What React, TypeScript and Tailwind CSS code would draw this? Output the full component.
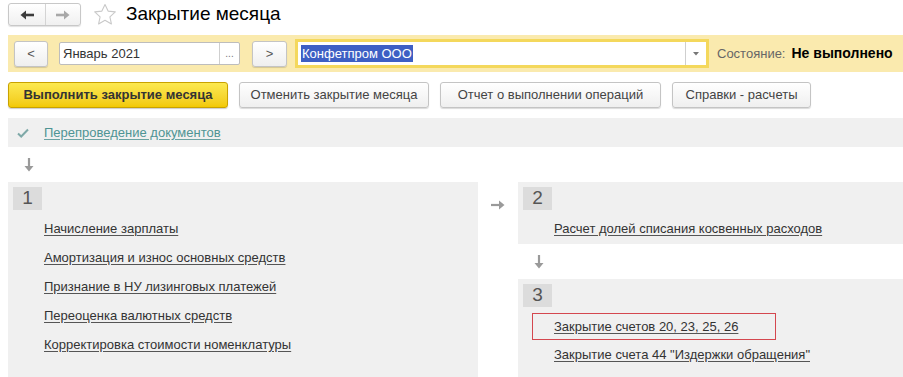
import React from 'react';

const font = { fontFamily: '"Liberation Sans", Arial, sans-serif' };

function Star() {
  return (
    <svg width="24" height="23" viewBox="0 0 24 23" className="block">
      <path
        d="M12 1.5l3.1 6.6 7.2.8-5.4 4.9 1.5 7.1L12 17.3l-6.4 3.6 1.5-7.1-5.4-4.9 7.2-.8z"
        fill="none"
        stroke="#c9c9c9"
        strokeWidth="1.1"
        strokeLinejoin="round"
      />
    </svg>
  );
}

function ArrowDown() {
  return (
    <svg width="10" height="14" viewBox="0 0 10 14" className="block">
      <path d="M5 0v9" stroke="#9a9a9a" strokeWidth="2.2" />
      <path d="M0.5 8h9L5 13.5z" fill="#9a9a9a" />
    </svg>
  );
}

function ArrowRight() {
  return (
    <svg width="14" height="10" viewBox="0 0 14 10" className="block">
      <path d="M0 5h9" stroke="#9a9a9a" strokeWidth="2.2" />
      <path d="M8 0.5v9L13.5 5z" fill="#9a9a9a" />
    </svg>
  );
}

function GrayButton({ children, className = '' }: { children: React.ReactNode; className?: string }) {
  return (
    <div
      className={`flex h-[26px] items-center justify-center rounded-[3px] border border-[#c4c4c4] bg-gradient-to-b from-white to-[#efefef] text-[13px] text-[#444] shadow-[0_1px_1px_rgba(0,0,0,0.15)] ${className}`}
    >
      {children}
    </div>
  );
}

function Step({ n }: { n: string }) {
  return (
    <div className="flex h-[23px] w-[29px] items-center justify-center bg-[#dcdcdc] text-[19px] text-[#555]">
      {n}
    </div>
  );
}

function Item({ children }: { children: React.ReactNode }) {
  return (
    <div className="flex h-[29px] items-center pl-[36px]">
      <span className="text-[13px] text-[#333] underline decoration-[#555] underline-offset-2">{children}</span>
    </div>
  );
}

export default function App() {
  const block1 = [
    'Начисление зарплаты',
    'Амортизация и износ основных средств',
    'Признание в НУ лизинговых платежей',
    'Переоценка валютных средств',
    'Корректировка стоимости номенклатуры',
  ];

  return (
    <div className="h-[377px] w-[903px] overflow-hidden bg-white text-[#333]" style={font}>
      {/* header */}
      <div className="flex h-[26px] items-end pl-[8px]">
        <div className="flex h-[23px] w-[73px] rounded-[3px] border border-[#c8c8c8] bg-gradient-to-b from-white to-[#f0f0f0] shadow-[0_1px_1px_rgba(0,0,0,0.12)]">
          <div className="flex w-[37px] items-center justify-center border-r border-[#d4d4d4]">
            <svg width="14" height="10" viewBox="0 0 14 10">
              <path d="M5 5h9" stroke="#3c3c3c" strokeWidth="2.6" />
              <path d="M6 0.5v9L0.5 5z" fill="#3c3c3c" />
            </svg>
          </div>
          <div className="flex flex-1 items-center justify-center">
            <svg width="14" height="10" viewBox="0 0 14 10">
              <path d="M0 5h9" stroke="#a8a8a8" strokeWidth="2.6" />
              <path d="M8 0.5v9L13.5 5z" fill="#a8a8a8" />
            </svg>
          </div>
        </div>
        <div className="ml-[12px]">
          <Star />
        </div>
        <div className="ml-[9px] mb-[1px] text-[19px] leading-[22px] text-black">Закрытие месяца</div>
      </div>

      {/* yellow bar */}
      <div className="ml-[8px] mt-[9px] flex h-[37px] items-center bg-[#faeaae] pl-[6px]">
        <GrayButton className="h-[23px] w-[34px] text-[#555]">&lt;</GrayButton>
        <div className="ml-[11px] flex h-[23px] w-[181px] rounded-[2px] border border-[#bdbdbd] bg-white">
          <div className="flex flex-1 items-center pl-[3px] text-[13px] text-[#333]">Январь 2021</div>
          <div className="flex w-[20px] items-end justify-center border-l border-[#cfcfcf] pb-[5px] text-[10px] leading-none text-[#777]">
            ...
          </div>
        </div>
        <GrayButton className="ml-[12px] h-[23px] w-[35px] text-[#555]">&gt;</GrayButton>
        <div className="ml-[8px] flex h-[29px] w-[414px] border-[3px] border-[#f4d85c] bg-white">
          <div className="flex flex-1 items-center pl-[3px]">
            <span className="bg-[#3d5fc4] px-[1px] text-[13px] leading-[17px] text-white">Конфетпром ООО</span>
          </div>
          <div className="flex w-[21px] items-center justify-center border-l border-[#cfcfcf]">
            <svg width="6" height="4" viewBox="0 0 6 4">
              <path d="M0 0h6L3 3.5z" fill="#777" />
            </svg>
          </div>
        </div>
        <div className="ml-[8px] text-[13px] text-[#666]">Состояние:</div>
        <div className="ml-[6px] text-[14px] font-bold text-black">Не выполнено</div>
      </div>

      {/* buttons */}
      <div className="ml-[8px] mt-[10px] flex gap-[11px]">
        <div className="flex h-[26px] w-[220px] items-center justify-center rounded-[3px] border border-[#c9a200] bg-gradient-to-b from-[#fce94f] to-[#f2c900] text-[13px] font-bold text-[#333] shadow-[0_1px_1px_rgba(0,0,0,0.2)]">
          Выполнить закрытие месяца
        </div>
        <GrayButton className="w-[190px]">Отменить закрытие месяца</GrayButton>
        <GrayButton className="w-[221px]">Отчет о выполнении операций</GrayButton>
        <GrayButton className="w-[139px]">Справки - расчеты</GrayButton>
      </div>

      {/* reposting row */}
      <div className="ml-[8px] mt-[10px] flex h-[29px] items-center bg-[#f0f0f0] pl-[9px]">
        <svg width="12" height="10" viewBox="0 0 12 10">
          <path d="M1 5.5l3.2 3L11 1.5" fill="none" stroke="#7fa9a8" strokeWidth="2" />
        </svg>
        <span className="ml-[15px] text-[13px] text-[#4f9494] underline decoration-[#6aa2a2] underline-offset-2">
          Перепроведение документов
        </span>
      </div>

      <div className="flex h-[35px] items-center pl-[24px]">
        <ArrowDown />
      </div>

      {/* steps */}
      <div className="flex pl-[8px]">
        <div className="h-[200px] w-[470px] bg-[#f0f0f0] pl-[5px] pt-[5px]">
          <Step n="1" />
          <div className="mt-[4px] -ml-[5px]">
            {block1.map((t) => (
              <Item key={t}>{t}</Item>
            ))}
          </div>
        </div>

        <div className="flex w-[40px] justify-center pt-[18px] pr-[1px]">
          <ArrowRight />
        </div>

        <div className="flex-1">
          <div className="h-[62px] bg-[#f0f0f0] pl-[5px] pt-[5px]">
            <Step n="2" />
            <div className="mt-[4px] -ml-[5px]">
              <Item>Расчет долей списания косвенных расходов</Item>
            </div>
          </div>
          <div className="flex h-[35px] items-center pl-[16px]">
            <ArrowDown />
          </div>
          <div className="h-[120px] bg-[#f0f0f0] pl-[5px] pt-[5px]">
            <Step n="3" />
            <div className="mt-[6px] ml-[9px] flex h-[27px] w-[244px] items-center border border-[#d4474e] pl-[21px]">
              <span className="text-[13px] text-[#333] underline decoration-[#555] underline-offset-2">
                Закрытие счетов 20, 23, 25, 26
              </span>
            </div>
            <div className="-ml-[5px]">
              <Item>Закрытие счета 44 "Издержки обращения"</Item>
            </div>
          </div>
        </div>
      </div>
    </div>
  );
}
